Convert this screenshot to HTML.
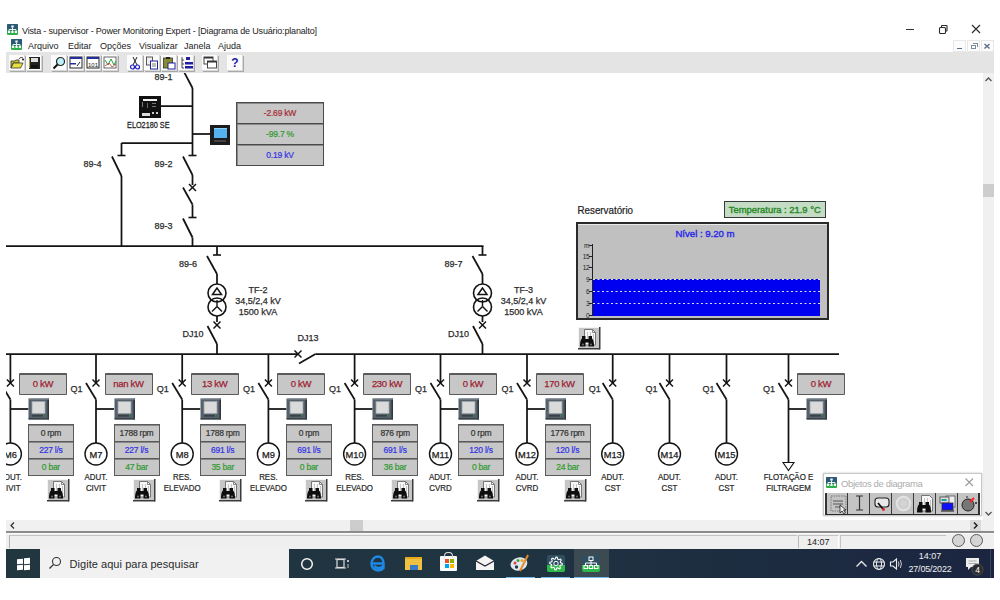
<!DOCTYPE html>
<html><head><meta charset="utf-8">
<style>
*{margin:0;padding:0;box-sizing:border-box}
html,body{width:1000px;height:600px;overflow:hidden;background:#fff;font-family:"Liberation Sans", sans-serif;position:relative}
.a{position:absolute}
#tb{left:6px;top:52px;width:988px;height:21px;background:#e4e4e4}
.btn{position:absolute;top:55px;width:16px;height:16px;background:#fbfbfb;box-shadow:1px 1px 0 #a8a8a8, inset -1px -1px 0 #d8d8d8}
.kw{position:absolute;width:48px;height:22px;background:#c7c7c7;border:1px solid #5a5a5a;border-top-width:2px;border-radius:1px;color:#9c2232;font-size:9.5px;text-align:center;line-height:18px;-webkit-text-stroke:0.25px #9c2232;letter-spacing:-0.3px}
.meter{position:absolute;width:21px;height:21px;background:#56606a;border-radius:1px}
.meter i{position:absolute;left:4px;top:3px;width:13px;height:12px;background:#dcdcdc}
.meter b{position:absolute;left:4px;top:17px;width:13px;height:2px;background:#3a4048}
.dp{position:absolute;width:46px;height:52px;background:#5a5a5a;padding:1px}
.dp div{height:16.3px;margin-bottom:0.7px;background:#c7c7c7;border-top:1px solid #888;font-size:8.5px;text-align:center;line-height:15px;-webkit-text-stroke:0.2px;letter-spacing:-0.25px}
.dp .r1{color:#333} .dp .r2{color:#3232e6} .dp .r3{color:#2f9a2f}
.mp{position:absolute;width:88px;height:64px;background:#4a4a4a;padding:1px}
.mp div{height:20.3px;margin-bottom:0.7px;background:#c7c7c7;border-top:1px solid #8a8a8a;border-left:1px solid #8a8a8a;font-size:8.5px;text-align:center;line-height:19px;-webkit-text-stroke:0.2px;letter-spacing:-0.2px}
.rep{position:absolute;width:22px;height:22px;background:#c9c9c9;border:1px solid #e8e8e8;border-right-color:#555;border-bottom-color:#555}
.rep:before{content:"";position:absolute;left:6px;top:2px;width:11px;height:15px;background:#f4f4f4;border:1px solid #777}
.rep:after{content:"";position:absolute;left:2px;top:9px;width:12px;height:9px;background:#111;border-radius:2px 2px 3px 3px}
</style></head><body>
<svg width="0" height="0" style="position:absolute"><defs>
<symbol id="appico" viewBox="0 0 11 11">
<rect x="0" y="0" width="11" height="11" rx="1" fill="#2fae4c"/>
<rect x="0" y="0" width="11" height="6.5" rx="1" fill="#2b5a76"/>
<rect x="4.3" y="1.5" width="2.4" height="2" fill="#fff"/>
<path d="M5.5 3.5 V5.5 M2 5.5 H9 M2 5.5 V7 M5.5 5.5 V7 M9 5.5 V7" stroke="#fff" stroke-width="0.9" fill="none"/>
<rect x="1" y="7" width="2.2" height="2" fill="#fff"/><rect x="4.4" y="7" width="2.2" height="2" fill="#fff"/><rect x="7.8" y="7" width="2.2" height="2" fill="#fff"/>
</symbol>
<symbol id="mtr" viewBox="0 0 22 22">
<rect x="0.5" y="0.5" width="20.5" height="21" rx="1" fill="#56606b"/>
<rect x="19.5" y="0.5" width="1.5" height="21" fill="#2e353d"/>
<rect x="0.5" y="20" width="20.5" height="1.5" fill="#3a424a"/>
<rect x="0.5" y="0.5" width="20.5" height="1.2" fill="#7a848e"/>
<rect x="4" y="3.5" width="13" height="12" fill="#dadada" stroke="#9aa2aa" stroke-width="0.8"/>
<rect x="4" y="17" width="13" height="1.6" fill="#3a4048"/>
<rect x="15" y="17" width="1.5" height="1.6" fill="#30a040"/>
</symbol>
<symbol id="rep" viewBox="0 0 23 23">
<rect x="0" y="0" width="22" height="22" fill="#c6c6c6"/>
<rect x="0" y="0" width="22" height="1" fill="#f4f4f4"/><rect x="0" y="0" width="1" height="22" fill="#f4f4f4"/>
<rect x="0" y="21" width="22" height="1.5" fill="#3c3c3c"/><rect x="21" y="0" width="1.5" height="22.5" fill="#3c3c3c"/>
<path d="M6.5 2.5 H14.5 L17.5 5.5 V18 H6.5 Z" fill="#f6f6f6" stroke="#5a5a5a" stroke-width="0.8"/>
<path d="M14.5 2.5 V5.5 H17.5" fill="none" stroke="#5a5a5a" stroke-width="0.7"/>
<path d="M9.5 5 V16 M12.5 5 V16 M15.5 7 V16" stroke="#b0b0b0" stroke-width="0.7"/>
<path d="M2 19.5 Q2 13 4 11.5 V9 H7.5 V12 H10.5 V9 H14 V11.5 Q16 13 16 19.5 H10.5 V15.5 H7.5 V19.5 Z" fill="#0e0e0e"/>
<circle cx="5" cy="17.5" r="1.1" fill="#666"/><circle cx="13" cy="17.5" r="1.1" fill="#666"/>
</symbol>
</defs></svg>
<!-- title bar -->
<svg class="a" style="left:7px;top:24px" width="11" height="11"><use href="#appico"/></svg>
<div class="a" style="left:22px;top:26px;font-size:9px;color:#222;white-space:nowrap;letter-spacing:-0.17px" id="title">Vista - supervisor - Power Monitoring Expert - [Diagrama de Usuário:planalto]</div>
<div class="a" style="left:906px;top:29px;width:8px;height:1px;background:#333"></div>
<svg class="a" style="left:937px;top:23px" width="12" height="12"><rect x="2.5" y="4.5" width="6" height="6" rx="1" fill="none" stroke="#2a2a2a" stroke-width="1.1"/><path d="M4.5 4.5 V3 Q4.5 2.5 5 2.5 H9.5 Q10 2.5 10 3 V7.5 Q10 8 9.5 8 H8.5" fill="none" stroke="#2a2a2a" stroke-width="1.1"/></svg>
<svg class="a" style="left:970px;top:23px" width="12" height="12"><path d="M2 2 L10 10 M10 2 L2 10" stroke="#2a2a2a" stroke-width="1.1"/></svg>
<!-- menu -->
<svg class="a" style="left:11px;top:39px" width="11" height="11"><use href="#appico"/></svg>
<div class="a" style="left:28px;top:40.8px;font-size:9px;color:#222;white-space:nowrap">
<span class="a" style="left:0">Arquivo</span><span class="a" style="left:40px">Editar</span><span class="a" style="left:72px">Opções</span><span class="a" style="left:111px">Visualizar</span><span class="a" style="left:156px">Janela</span><span class="a" style="left:190px">Ajuda</span></div>
<div class="a" style="left:953px;top:40px;width:12.5px;height:12px;background:#fcfcfc;border:1px solid #e8e8e8"></div>
<div class="a" style="left:967px;top:40px;width:12.5px;height:12px;background:#fcfcfc;border:1px solid #e8e8e8"></div>
<div class="a" style="left:981px;top:40px;width:12.5px;height:12px;background:#fcfcfc;border:1px solid #e8e8e8"></div>
<!-- toolbar -->
<div class="a" id="tb"></div>
<div class="btn" style="left:9px"></div><div class="btn" style="left:26px"></div>
<div class="btn" style="left:51px"></div><div class="btn" style="left:68px"></div><div class="btn" style="left:85px"></div><div class="btn" style="left:102px"></div>
<div class="btn" style="left:127px"></div><div class="btn" style="left:144px"></div><div class="btn" style="left:161px"></div><div class="btn" style="left:178px"></div>
<div class="btn" style="left:202px"></div><div class="btn" style="left:227px"></div>

<svg class="a" style="left:0;top:52px" width="260" height="21">
<!-- open folder -->
<g transform="translate(9,3)"><path d="M2 6 H6 L7 5 H10 V8 H4 L2 13 Z" fill="#c8c820" stroke="#333" stroke-width="0.8"/><path d="M2 13 L4.5 8 H14 L11.5 13 Z" fill="#e8e040" stroke="#333" stroke-width="0.8"/><path d="M10 4 Q12 1 14 3" fill="none" stroke="#222" stroke-width="0.8"/><circle cx="14" cy="4.5" r="1" fill="#111"/></g>
<!-- save -->
<g transform="translate(26,3)"><rect x="3" y="2" width="11" height="12" fill="#222"/><rect x="5" y="3" width="7" height="4" fill="#ddd"/><rect x="5" y="10" width="7" height="3" fill="#111"/><path d="M3.5 3 V13" stroke="#c8c840" stroke-width="0.8"/></g>
<!-- zoom -->
<g transform="translate(51,3)"><circle cx="9.5" cy="6.5" r="4" fill="#bff0f8" stroke="#222" stroke-width="1.2"/><line x1="6.5" y1="9.5" x2="2.5" y2="13.5" stroke="#111" stroke-width="2"/></g>
<!-- window icon -->
<g transform="translate(68,3)"><rect x="2" y="2" width="12" height="11" fill="#fff" stroke="#222" stroke-width="1"/><rect x="2" y="2" width="12" height="2" fill="#2030a0"/><rect x="2" y="8" width="6" height="1.5" fill="#2030a0"/><path d="M9 11 L12 7" stroke="#222" stroke-width="1"/></g>
<!-- table 101 -->
<g transform="translate(85,3)"><rect x="2" y="2" width="12" height="11" fill="#fff" stroke="#222" stroke-width="1"/><rect x="2" y="2" width="12" height="2" fill="#2030a0"/><text x="8" y="11.5" font-size="6" text-anchor="middle" fill="#222" font-family="Liberation Sans">101</text></g>
<!-- chart -->
<g transform="translate(102,3)"><rect x="2" y="2" width="12" height="11" fill="#fff" stroke="#444" stroke-width="0.8"/><path d="M3 5 L6 10 L9 4 L12 10 L14 6" fill="none" stroke="#20a040" stroke-width="1"/><path d="M3 11 L7 8 L10 12 L14 9" fill="none" stroke="#d03030" stroke-width="0.8"/></g>
<!-- scissors -->
<g transform="translate(127,3)"><path d="M6 2 L10 10 M10 2 L6 10" stroke="#222" stroke-width="1"/><circle cx="5.5" cy="12" r="2" fill="none" stroke="#2020c0" stroke-width="1.2"/><circle cx="10.5" cy="12" r="2" fill="none" stroke="#2020c0" stroke-width="1.2"/></g>
<!-- copy -->
<g transform="translate(144,3)"><rect x="2.5" y="2" width="6" height="8" fill="#eee" stroke="#333" stroke-width="0.8"/><rect x="6.5" y="6" width="7" height="8" fill="#fff" stroke="#2020a0" stroke-width="1"/><path d="M8 9 H12 M8 11 H12" stroke="#444" stroke-width="0.7"/></g>
<!-- paste -->
<g transform="translate(161,3)"><rect x="2.5" y="3" width="9" height="10" fill="#8a8a30" stroke="#333" stroke-width="0.8"/><rect x="5" y="2" width="4" height="2" fill="#222"/><rect x="7" y="8" width="7" height="6" fill="#fff" stroke="#2020a0" stroke-width="1"/></g>
<!-- tree -->
<g transform="translate(178,3)"><path d="M4 2 V13 M4 5 H6 M4 9 H6 M4 13 H6" stroke="#222" stroke-width="0.8" fill="none"/><rect x="8" y="2" width="4" height="3" fill="#2020a0"/><rect x="7" y="7" width="8" height="2.5" fill="#2020a0"/><rect x="7" y="11" width="8" height="2.5" fill="#2020a0"/></g>
<!-- windows -->
<g transform="translate(202,3)"><rect x="2" y="2" width="9" height="7" fill="#fff" stroke="#333" stroke-width="0.9"/><rect x="2" y="2" width="9" height="1.5" fill="#333"/><rect x="5.5" y="6" width="9" height="7" fill="#fff" stroke="#333" stroke-width="0.9"/><rect x="5.5" y="6" width="9" height="1.5" fill="#333"/></g>
<!-- help -->
<text x="235" y="15" font-size="12" font-weight="bold" text-anchor="middle" fill="#1c1ca8" font-family="Liberation Sans">?</text>
</svg>
<!-- scrollbars -->
<div class="a" style="left:983px;top:73px;width:11px;height:447px;background:#f0f0f0"></div>
<div class="a" style="left:983px;top:184px;width:11px;height:13px;background:#cdcdcd"></div>
<div class="a" style="left:6px;top:520px;width:988px;height:11px;background:#f0f0f0"></div>
<div class="a" style="left:350px;top:520px;width:13px;height:11px;background:#cdcdcd"></div>
<div class="a" style="left:6px;top:531px;width:988px;height:1.5px;background:#8c8c8c"></div>
<div class="a" style="left:6px;top:532.5px;width:988px;height:16.5px;background:#efefef;border-top:1px solid #fafafa"></div>

<!-- status bar items -->
<div class="a" style="left:9px;top:534.5px;width:788px;height:13.5px;border-left:1px solid #b0b0b0;border-top:1px solid #c4c4c4"></div>
<div class="a" style="left:798px;top:534.5px;width:40.5px;height:13.5px;border-left:1px solid #b8b8b8;border-top:1px solid #c4c4c4;border-right:1px solid #fff;font-size:9px;line-height:12px;text-align:center;color:#222">14:07</div>
<div class="a" style="left:840px;top:534.5px;width:106px;height:13.5px;border-left:1px solid #c4c4c4;border-top:1px solid #c4c4c4"></div>
<div class="a" style="left:952px;top:534px;width:13px;height:13px;border-radius:50%;background:#d4d4d4;border:1px solid #5a5a5a"></div>
<div class="a" style="left:970px;top:534px;width:13px;height:13px;border-radius:50%;background:#d4d4d4;border:1px solid #5a5a5a"></div>
<!-- scroll arrows -->
<svg class="a" style="left:983px;top:74px" width="11" height="11"><path d="M2.5 7 L5.5 4 L8.5 7" fill="none" stroke="#555" stroke-width="1.3"/></svg>
<svg class="a" style="left:983px;top:508px" width="11" height="11"><path d="M2.5 4 L5.5 7 L8.5 4" fill="none" stroke="#555" stroke-width="1.3"/></svg>
<svg class="a" style="left:7px;top:520px" width="11" height="11"><path d="M7 2.5 L4 5.5 L7 8.5" fill="none" stroke="#333" stroke-width="1.3"/></svg>
<div class="a" style="left:970px;top:520px;width:11px;height:11px;background:#dadada"></div>
<svg class="a" style="left:970px;top:520px" width="11" height="11"><path d="M4 2.5 L7 5.5 L4 8.5" fill="none" stroke="#222" stroke-width="1.5"/></svg>
<!-- MDI buttons -->
<div class="a" style="left:957px;top:47.5px;width:5px;height:1.5px;background:#5a7088"></div>
<div class="a" style="left:970.5px;top:44.5px;width:5px;height:4.5px;border:1px solid #7a8ca0"></div>
<div class="a" style="left:972.5px;top:42.5px;width:5px;height:4.5px;border-top:1px solid #7a8ca0;border-right:1px solid #7a8ca0"></div>
<svg class="a" style="left:981px;top:40px" width="12" height="12"><path d="M3.5 4 L8.5 8.5 M8.5 4 L3.5 8.5" stroke="#5a7088" stroke-width="1.4"/></svg>
<!-- taskbar -->
<div class="a" style="left:6px;top:549px;width:988px;height:29px;background:linear-gradient(90deg,#22363f 0%,#1f3441 50%,#1b2540 100%)"></div>
<div class="a" style="left:40px;top:549px;width:249px;height:29px;background:#f1f1f1"></div>

<!-- taskbar content -->
<div class="a" style="left:17px;top:558.5px;width:5.5px;height:5px;background:#fff;transform:skewY(-4deg)"></div>
<div class="a" style="left:23.5px;top:558px;width:5.5px;height:5.5px;background:#fff;transform:skewY(-4deg)"></div>
<div class="a" style="left:17px;top:564.5px;width:5.5px;height:4.5px;background:#fff;transform:skewY(-4deg)"></div>
<div class="a" style="left:23.5px;top:564.5px;width:5.5px;height:5px;background:#fff;transform:skewY(-4deg)"></div>
<svg class="a" style="left:48px;top:556px" width="14" height="14"><circle cx="8.5" cy="5.5" r="4" fill="none" stroke="#333" stroke-width="1.1"/><line x1="5.6" y1="8.4" x2="1.5" y2="12.5" stroke="#333" stroke-width="1.3"/></svg>
<div class="a" style="left:69.5px;top:557px;font-size:11px;line-height:14px;color:#2a2a2a;white-space:nowrap;letter-spacing:0.05px">Digite aqui para pesquisar</div>
<svg class="a" style="left:299px;top:556px" width="16" height="16"><circle cx="8" cy="8" r="5.3" fill="none" stroke="#f4f4f4" stroke-width="1.5"/></svg>
<svg class="a" style="left:334px;top:556px" width="16" height="16"><rect x="3" y="3.5" width="7" height="8" fill="none" stroke="#ddd" stroke-width="1.2"/><line x1="1" y1="3" x2="12" y2="3" stroke="#ddd" stroke-width="1"/><line x1="1" y1="12" x2="12" y2="12" stroke="#ddd" stroke-width="1"/><line x1="14" y1="4" x2="14" y2="6" stroke="#eee" stroke-width="1.5"/><line x1="14" y1="8" x2="14" y2="12" stroke="#bbb" stroke-width="1"/></svg>
<svg class="a" style="left:369px;top:554px" width="18" height="18"><path d="M3.5 9.5 H14.5 C14.5 5 12 2.5 8.8 2.5 C5 2.5 2.5 6 2.5 10 C2.5 14 5.5 16.5 9 16.5 C11.5 16.5 13.3 15.7 14.5 14.3 V11.8 C13 13.4 11.3 14 9.5 14 C7.3 14 5.8 12.8 5.6 11.5" fill="none" stroke="#1e88e5" stroke-width="2.4"/></svg>
<div class="a" style="left:405px;top:557px;width:17px;height:13px;background:#f0c040;border-top:2px solid #e8a820"></div>
<div class="a" style="left:410px;top:565px;width:8px;height:5px;background:#3a78c8"></div>
<div class="a" style="left:440px;top:556px;width:17px;height:15px;background:#fafafa;border-radius:1px"></div>
<div class="a" style="left:444px;top:552px;width:9px;height:6px;border:1.2px solid #ddd;border-bottom:none;border-radius:4px 4px 0 0"></div>
<div class="a" style="left:445px;top:559px;width:4px;height:4px;background:#f25022"></div><div class="a" style="left:449.5px;top:559px;width:4px;height:4px;background:#7fba00"></div>
<div class="a" style="left:445px;top:563.5px;width:4px;height:4px;background:#00a4ef"></div><div class="a" style="left:449.5px;top:563.5px;width:4px;height:4px;background:#ffb900"></div>
<svg class="a" style="left:475px;top:554px" width="20" height="18"><path d="M1 7 L10 1.5 L19 7 V16 H1 Z" fill="#f4f4f4"/><path d="M1 7 L10 12 L19 7" fill="none" stroke="#223" stroke-width="1.2"/></svg>
<svg class="a" style="left:509px;top:553px" width="22" height="20"><ellipse cx="10" cy="11" rx="8.5" ry="6.5" fill="#dfe8ee" transform="rotate(-15 10 11)"/><circle cx="6" cy="10" r="1.5" fill="#e04040"/><circle cx="9" cy="7.5" r="1.5" fill="#40a040"/><circle cx="13" cy="7.5" r="1.5" fill="#f0a020"/><circle cx="7.5" cy="14" r="1.7" fill="#2a3a48"/><line x1="11" y1="18" x2="19" y2="2" stroke="#e08a2a" stroke-width="2"/></svg>
<div class="a" style="left:547px;top:555px;width:18px;height:17px;background:#2f4f60;border-radius:2px;overflow:hidden"><div class="a" style="left:0;top:10px;width:18px;height:7px;background:#2fb84a"></div></div>
<svg class="a" style="left:547px;top:555px" width="18" height="17"><path d="M15.30,8.50 L15.18,9.73 L13.25,10.26 L12.82,11.06 L13.45,12.95 L12.50,13.74 L10.76,12.75 L9.90,13.01 L9.00,14.80 L7.77,14.68 L7.24,12.75 L6.44,12.32 L4.55,12.95 L3.76,12.00 L4.75,10.26 L4.49,9.40 L2.70,8.50 L2.82,7.27 L4.75,6.74 L5.18,5.94 L4.55,4.05 L5.50,3.26 L7.24,4.25 L8.10,3.99 L9.00,2.20 L10.23,2.32 L10.76,4.25 L11.56,4.68 L13.45,4.05 L14.24,5.00 L13.25,6.74 L13.51,7.60 Z" fill="none" stroke="#fff" stroke-width="1.1"/><circle cx="9" cy="8.5" r="2.2" fill="none" stroke="#fff" stroke-width="1"/></svg>
<div class="a" style="left:574px;top:549px;width:35px;height:29px;background:#3c4a52"></div>
<div class="a" style="left:582px;top:555px;width:18px;height:17px;background:#2f4f60;border-radius:2px;overflow:hidden"><div class="a" style="left:0;top:10px;width:18px;height:7px;background:#2fb84a"></div></div>
<svg class="a" style="left:582px;top:555px" width="18" height="17"><rect x="7" y="2" width="4" height="3.5" fill="none" stroke="#fff" stroke-width="1"/><path d="M9 5.5 V8 M3.5 8 H14.5 M3.5 8 V10.5 M9 8 V10.5 M14.5 8 V10.5" stroke="#fff" stroke-width="1" fill="none"/><rect x="2" y="10.5" width="3.5" height="3" fill="none" stroke="#fff" stroke-width="1"/><rect x="7.2" y="10.5" width="3.5" height="3" fill="none" stroke="#fff" stroke-width="1"/><rect x="12.5" y="10.5" width="3.5" height="3" fill="none" stroke="#fff" stroke-width="1"/></svg>
<div class="a" style="left:506px;top:576.5px;width:29px;height:1.5px;background:#76b9ed"></div>
<div class="a" style="left:541px;top:576.5px;width:29px;height:1.5px;background:#76b9ed"></div>
<div class="a" style="left:574px;top:576.5px;width:35px;height:1.5px;background:#76b9ed"></div>
<svg class="a" style="left:855px;top:559px" width="13" height="9"><path d="M1.5 7.5 L6.5 2.5 L11.5 7.5" fill="none" stroke="#e8e8e8" stroke-width="1.4"/></svg>
<svg class="a" style="left:872px;top:557px" width="14" height="14"><circle cx="7" cy="7" r="5.5" fill="none" stroke="#eee" stroke-width="1.1"/><ellipse cx="7" cy="7" rx="2.5" ry="5.5" fill="none" stroke="#eee" stroke-width="1"/><line x1="1.5" y1="5" x2="12.5" y2="5" stroke="#eee" stroke-width="1"/><line x1="1.5" y1="9" x2="12.5" y2="9" stroke="#eee" stroke-width="1"/></svg>
<svg class="a" style="left:889px;top:557px" width="14" height="14"><path d="M1.5 5 H4 L7.5 2 V12 L4 9 H1.5 Z" fill="none" stroke="#eee" stroke-width="1.1"/><path d="M9.3 4.5 Q10.8 7 9.3 9.5 M11.3 3 Q13.5 7 11.3 11" fill="none" stroke="#ccc" stroke-width="1"/></svg>
<div class="a" style="left:905px;top:550.5px;width:50px;text-align:center;font-size:9px;line-height:11px;color:#f0f0f0">14:07</div>
<div class="a" style="left:905px;top:563.5px;width:50px;text-align:center;font-size:9px;line-height:11px;color:#f0f0f0;letter-spacing:-0.2px">27/05/2022</div>
<svg class="a" style="left:963px;top:555px" width="22" height="22"><path d="M3 3 H16 V12 H8 L5 15 V12 H3 Z" fill="#eee"/><line x1="5.5" y1="6" x2="13.5" y2="6" stroke="#999" stroke-width="0.8"/><line x1="5.5" y1="8.5" x2="13.5" y2="8.5" stroke="#999" stroke-width="0.8"/><circle cx="14.5" cy="14.5" r="5.5" fill="#2b2b2b" stroke="#555" stroke-width="0.8"/><text x="14.5" y="17.8" font-size="8.5" fill="#fff" text-anchor="middle" font-family="Liberation Sans">4</text></svg>
<div class="a" style="left:990px;top:549px;width:1px;height:29px;background:#38465a"></div>
<!-- diagram -->
<svg class="a" style="left:0;top:0" width="1000" height="600" font-family='"Liberation Sans", sans-serif'>
<defs><clipPath id="cv"><rect x="6" y="73" width="977" height="447"/></clipPath></defs>
<g clip-path="url(#cv)">
<line x1="183" y1="70" x2="192.5" y2="88" stroke="#141414" stroke-width="1.75"/>
<line x1="192.5" y1="88" x2="192.5" y2="155.5" stroke="#141414" stroke-width="1.75"/>
<line x1="188.5" y1="155.5" x2="196.5" y2="155.5" stroke="#141414" stroke-width="1.6"/>
<line x1="160" y1="106" x2="192.5" y2="106" stroke="#141414" stroke-width="1.75"/>
<line x1="192.5" y1="134" x2="210" y2="134" stroke="#141414" stroke-width="1.75"/>
<line x1="121.5" y1="143" x2="192.5" y2="143" stroke="#141414" stroke-width="1.75"/>
<line x1="121.5" y1="143" x2="121.5" y2="155.5" stroke="#141414" stroke-width="1.75"/>
<line x1="117.5" y1="155.5" x2="125.5" y2="155.5" stroke="#141414" stroke-width="1.6"/>
<line x1="112" y1="156.5" x2="121.5" y2="176" stroke="#141414" stroke-width="1.75"/>
<line x1="121.5" y1="176" x2="121.5" y2="246" stroke="#141414" stroke-width="1.75"/>
<line x1="183" y1="156.5" x2="192.5" y2="175" stroke="#141414" stroke-width="1.75"/>
<line x1="192.5" y1="175" x2="192.5" y2="185" stroke="#141414" stroke-width="1.75"/>
<line x1="189.0" y1="184.0" x2="196.0" y2="191.0" stroke="#141414" stroke-width="1.5"/>
<line x1="189.0" y1="191.0" x2="196.0" y2="184.0" stroke="#141414" stroke-width="1.5"/>
<line x1="183" y1="187.5" x2="192.5" y2="204.5" stroke="#141414" stroke-width="1.75"/>
<line x1="192.5" y1="204.5" x2="192.5" y2="217.5" stroke="#141414" stroke-width="1.75"/>
<line x1="188.5" y1="217.5" x2="196.5" y2="217.5" stroke="#141414" stroke-width="1.6"/>
<line x1="183" y1="218.5" x2="192.5" y2="237.5" stroke="#141414" stroke-width="1.75"/>
<line x1="192.5" y1="237.5" x2="192.5" y2="246" stroke="#141414" stroke-width="1.75"/>
<text transform="translate(163.5,79.5) scale(1.0,1)" font-size="9" fill="#2c2c2c" stroke="#2c2c2c" stroke-width="0.25" text-anchor="middle" font-weight="normal" >89-1</text>
<text transform="translate(92.5,167) scale(1.0,1)" font-size="9" fill="#2c2c2c" stroke="#2c2c2c" stroke-width="0.25" text-anchor="middle" font-weight="normal" >89-4</text>
<text transform="translate(163.5,167) scale(1.0,1)" font-size="9" fill="#2c2c2c" stroke="#2c2c2c" stroke-width="0.25" text-anchor="middle" font-weight="normal" >89-2</text>
<text transform="translate(163.5,228.5) scale(1.0,1)" font-size="9" fill="#2c2c2c" stroke="#2c2c2c" stroke-width="0.25" text-anchor="middle" font-weight="normal" >89-3</text>
<text transform="translate(148.3,127.8) scale(0.86,1)" font-size="8.5" fill="#242424" stroke="#242424" stroke-width="0.25" text-anchor="middle" font-weight="normal" >ELO2180 SE</text>
<line x1="6" y1="246" x2="483.45" y2="246" stroke="#141414" stroke-width="1.75"/>
<line x1="217" y1="246" x2="217" y2="255" stroke="#141414" stroke-width="1.75"/>
<line x1="213" y1="255" x2="221" y2="255" stroke="#141414" stroke-width="1.6"/>
<line x1="207" y1="256" x2="217" y2="274" stroke="#141414" stroke-width="1.75"/>
<line x1="217" y1="274" x2="217" y2="284" stroke="#141414" stroke-width="1.75"/>
<circle cx="217" cy="293" r="9" fill="none" stroke="#141414" stroke-width="1.6"/>
<circle cx="217" cy="307" r="9" fill="none" stroke="#141414" stroke-width="1.6"/>
<polygon points="217,288 212.5,294.5 221.5,294.5" fill="none" stroke="#141414" stroke-width="1.5"/>
<line x1="217" y1="306.5" x2="217" y2="300" stroke="#141414" stroke-width="1.4"/>
<line x1="217" y1="306.5" x2="212" y2="311.5" stroke="#141414" stroke-width="1.4"/>
<line x1="217" y1="306.5" x2="222" y2="311.5" stroke="#141414" stroke-width="1.4"/>
<line x1="217" y1="316" x2="217" y2="322" stroke="#141414" stroke-width="1.75"/>
<line x1="213.5" y1="321.5" x2="220.5" y2="328.5" stroke="#141414" stroke-width="1.5"/>
<line x1="213.5" y1="328.5" x2="220.5" y2="321.5" stroke="#141414" stroke-width="1.5"/>
<line x1="207.5" y1="326" x2="217" y2="344" stroke="#141414" stroke-width="1.75"/>
<line x1="217" y1="344" x2="217" y2="354" stroke="#141414" stroke-width="1.75"/>
<text transform="translate(188,267) scale(1.0,1)" font-size="9" fill="#2c2c2c" stroke="#2c2c2c" stroke-width="0.25" text-anchor="middle" font-weight="normal" >89-6</text>
<text transform="translate(193,337) scale(1.0,1)" font-size="9" fill="#2c2c2c" stroke="#2c2c2c" stroke-width="0.25" text-anchor="middle" font-weight="normal" >DJ10</text>
<text transform="translate(258,293) scale(1.0,1)" font-size="9" fill="#2c2c2c" stroke="#2c2c2c" stroke-width="0.25" text-anchor="middle" font-weight="normal" >TF-2</text>
<text transform="translate(258,304) scale(1.0,1)" font-size="9" fill="#2c2c2c" stroke="#2c2c2c" stroke-width="0.25" text-anchor="middle" font-weight="normal" >34,5/2,4 kV</text>
<text transform="translate(258,315) scale(1.0,1)" font-size="9" fill="#2c2c2c" stroke="#2c2c2c" stroke-width="0.25" text-anchor="middle" font-weight="normal" >1500 kVA</text>
<line x1="482.5" y1="246" x2="482.5" y2="255" stroke="#141414" stroke-width="1.75"/>
<line x1="478.5" y1="255" x2="486.5" y2="255" stroke="#141414" stroke-width="1.6"/>
<line x1="472.5" y1="256" x2="482.5" y2="274" stroke="#141414" stroke-width="1.75"/>
<line x1="482.5" y1="274" x2="482.5" y2="284" stroke="#141414" stroke-width="1.75"/>
<circle cx="482.5" cy="293" r="9" fill="none" stroke="#141414" stroke-width="1.6"/>
<circle cx="482.5" cy="307" r="9" fill="none" stroke="#141414" stroke-width="1.6"/>
<polygon points="482.5,288 478.0,294.5 487.0,294.5" fill="none" stroke="#141414" stroke-width="1.5"/>
<line x1="482.5" y1="306.5" x2="482.5" y2="300" stroke="#141414" stroke-width="1.4"/>
<line x1="482.5" y1="306.5" x2="477.5" y2="311.5" stroke="#141414" stroke-width="1.4"/>
<line x1="482.5" y1="306.5" x2="487.5" y2="311.5" stroke="#141414" stroke-width="1.4"/>
<line x1="482.5" y1="316" x2="482.5" y2="322" stroke="#141414" stroke-width="1.75"/>
<line x1="479.0" y1="321.5" x2="486.0" y2="328.5" stroke="#141414" stroke-width="1.5"/>
<line x1="479.0" y1="328.5" x2="486.0" y2="321.5" stroke="#141414" stroke-width="1.5"/>
<line x1="473.0" y1="326" x2="482.5" y2="344" stroke="#141414" stroke-width="1.75"/>
<line x1="482.5" y1="344" x2="482.5" y2="354" stroke="#141414" stroke-width="1.75"/>
<text transform="translate(453.5,267) scale(1.0,1)" font-size="9" fill="#2c2c2c" stroke="#2c2c2c" stroke-width="0.25" text-anchor="middle" font-weight="normal" >89-7</text>
<text transform="translate(458.5,337) scale(1.0,1)" font-size="9" fill="#2c2c2c" stroke="#2c2c2c" stroke-width="0.25" text-anchor="middle" font-weight="normal" >DJ10</text>
<text transform="translate(523.5,293) scale(1.0,1)" font-size="9" fill="#2c2c2c" stroke="#2c2c2c" stroke-width="0.25" text-anchor="middle" font-weight="normal" >TF-3</text>
<text transform="translate(523.5,304) scale(1.0,1)" font-size="9" fill="#2c2c2c" stroke="#2c2c2c" stroke-width="0.25" text-anchor="middle" font-weight="normal" >34,5/2,4 kV</text>
<text transform="translate(523.5,315) scale(1.0,1)" font-size="9" fill="#2c2c2c" stroke="#2c2c2c" stroke-width="0.25" text-anchor="middle" font-weight="normal" >1500 kVA</text>
<line x1="6" y1="354" x2="298" y2="354" stroke="#141414" stroke-width="1.75"/>
<line x1="294.5" y1="350.5" x2="301.5" y2="357.5" stroke="#141414" stroke-width="1.5"/>
<line x1="294.5" y1="357.5" x2="301.5" y2="350.5" stroke="#141414" stroke-width="1.5"/>
<line x1="299" y1="363.5" x2="315.5" y2="354" stroke="#141414" stroke-width="1.75"/>
<line x1="315.5" y1="354" x2="839" y2="354" stroke="#141414" stroke-width="1.75"/>
<text transform="translate(308,341) scale(1.0,1)" font-size="9" fill="#2c2c2c" stroke="#2c2c2c" stroke-width="0.25" text-anchor="middle" font-weight="normal" >DJ13</text>
<line x1="10.4" y1="354" x2="10.4" y2="383" stroke="#141414" stroke-width="1.75"/>
<line x1="6.9" y1="379.5" x2="13.9" y2="386.5" stroke="#141414" stroke-width="1.5"/>
<line x1="6.9" y1="386.5" x2="13.9" y2="379.5" stroke="#141414" stroke-width="1.5"/>
<line x1="0.40000000000000036" y1="383" x2="10.4" y2="399.5" stroke="#141414" stroke-width="1.75"/>
<line x1="10.4" y1="399.5" x2="10.4" y2="443" stroke="#141414" stroke-width="1.75"/>
<circle cx="10.4" cy="454" r="11" fill="#fff" stroke="#141414" stroke-width="1.4"/>
<text transform="translate(10.4,457.6) scale(1.0,1)" font-size="9.3" fill="#202020" stroke="#202020" stroke-width="0.25" text-anchor="middle" font-weight="normal" >M6</text>
<text transform="translate(10.4,480) scale(0.88,1)" font-size="9" fill="#2c2c2c" stroke="#2c2c2c" stroke-width="0.25" text-anchor="middle" font-weight="normal" >ADUT.</text>
<text transform="translate(10.4,490.5) scale(0.88,1)" font-size="9" fill="#2c2c2c" stroke="#2c2c2c" stroke-width="0.25" text-anchor="middle" font-weight="normal" >CIVIT</text>
<text transform="translate(-9.1,391.8) scale(1.0,1)" font-size="9" fill="#2c2c2c" stroke="#2c2c2c" stroke-width="0.25" text-anchor="middle" font-weight="normal" >Q1</text>
<line x1="10.4" y1="409" x2="28.4" y2="409" stroke="#141414" stroke-width="1.75"/>
<line x1="96" y1="354" x2="96" y2="383" stroke="#141414" stroke-width="1.75"/>
<line x1="92.5" y1="379.5" x2="99.5" y2="386.5" stroke="#141414" stroke-width="1.5"/>
<line x1="92.5" y1="386.5" x2="99.5" y2="379.5" stroke="#141414" stroke-width="1.5"/>
<line x1="86" y1="383" x2="96" y2="399.5" stroke="#141414" stroke-width="1.75"/>
<line x1="96" y1="399.5" x2="96" y2="443" stroke="#141414" stroke-width="1.75"/>
<circle cx="96" cy="454" r="11" fill="#fff" stroke="#141414" stroke-width="1.4"/>
<text transform="translate(96,457.6) scale(1.0,1)" font-size="9.3" fill="#202020" stroke="#202020" stroke-width="0.25" text-anchor="middle" font-weight="normal" >M7</text>
<text transform="translate(96,480) scale(0.88,1)" font-size="9" fill="#2c2c2c" stroke="#2c2c2c" stroke-width="0.25" text-anchor="middle" font-weight="normal" >ADUT.</text>
<text transform="translate(96,490.5) scale(0.88,1)" font-size="9" fill="#2c2c2c" stroke="#2c2c2c" stroke-width="0.25" text-anchor="middle" font-weight="normal" >CIVIT</text>
<text transform="translate(76.5,391.8) scale(1.0,1)" font-size="9" fill="#2c2c2c" stroke="#2c2c2c" stroke-width="0.25" text-anchor="middle" font-weight="normal" >Q1</text>
<line x1="96" y1="409" x2="114" y2="409" stroke="#141414" stroke-width="1.75"/>
<line x1="182.2" y1="354" x2="182.2" y2="383" stroke="#141414" stroke-width="1.75"/>
<line x1="178.7" y1="379.5" x2="185.7" y2="386.5" stroke="#141414" stroke-width="1.5"/>
<line x1="178.7" y1="386.5" x2="185.7" y2="379.5" stroke="#141414" stroke-width="1.5"/>
<line x1="172.2" y1="383" x2="182.2" y2="399.5" stroke="#141414" stroke-width="1.75"/>
<line x1="182.2" y1="399.5" x2="182.2" y2="443" stroke="#141414" stroke-width="1.75"/>
<circle cx="182.2" cy="454" r="11" fill="#fff" stroke="#141414" stroke-width="1.4"/>
<text transform="translate(182.2,457.6) scale(1.0,1)" font-size="9.3" fill="#202020" stroke="#202020" stroke-width="0.25" text-anchor="middle" font-weight="normal" >M8</text>
<text transform="translate(182.2,480) scale(0.88,1)" font-size="9" fill="#2c2c2c" stroke="#2c2c2c" stroke-width="0.25" text-anchor="middle" font-weight="normal" >RES.</text>
<text transform="translate(182.2,490.5) scale(0.88,1)" font-size="9" fill="#2c2c2c" stroke="#2c2c2c" stroke-width="0.25" text-anchor="middle" font-weight="normal" >ELEVADO</text>
<text transform="translate(162.7,391.8) scale(1.0,1)" font-size="9" fill="#2c2c2c" stroke="#2c2c2c" stroke-width="0.25" text-anchor="middle" font-weight="normal" >Q1</text>
<line x1="182.2" y1="409" x2="200.2" y2="409" stroke="#141414" stroke-width="1.75"/>
<line x1="268.4" y1="354" x2="268.4" y2="383" stroke="#141414" stroke-width="1.75"/>
<line x1="264.9" y1="379.5" x2="271.9" y2="386.5" stroke="#141414" stroke-width="1.5"/>
<line x1="264.9" y1="386.5" x2="271.9" y2="379.5" stroke="#141414" stroke-width="1.5"/>
<line x1="258.4" y1="383" x2="268.4" y2="399.5" stroke="#141414" stroke-width="1.75"/>
<line x1="268.4" y1="399.5" x2="268.4" y2="443" stroke="#141414" stroke-width="1.75"/>
<circle cx="268.4" cy="454" r="11" fill="#fff" stroke="#141414" stroke-width="1.4"/>
<text transform="translate(268.4,457.6) scale(1.0,1)" font-size="9.3" fill="#202020" stroke="#202020" stroke-width="0.25" text-anchor="middle" font-weight="normal" >M9</text>
<text transform="translate(268.4,480) scale(0.88,1)" font-size="9" fill="#2c2c2c" stroke="#2c2c2c" stroke-width="0.25" text-anchor="middle" font-weight="normal" >RES.</text>
<text transform="translate(268.4,490.5) scale(0.88,1)" font-size="9" fill="#2c2c2c" stroke="#2c2c2c" stroke-width="0.25" text-anchor="middle" font-weight="normal" >ELEVADO</text>
<text transform="translate(248.89999999999998,391.8) scale(1.0,1)" font-size="9" fill="#2c2c2c" stroke="#2c2c2c" stroke-width="0.25" text-anchor="middle" font-weight="normal" >Q1</text>
<line x1="268.4" y1="409" x2="286.4" y2="409" stroke="#141414" stroke-width="1.75"/>
<line x1="354.6" y1="354" x2="354.6" y2="383" stroke="#141414" stroke-width="1.75"/>
<line x1="351.1" y1="379.5" x2="358.1" y2="386.5" stroke="#141414" stroke-width="1.5"/>
<line x1="351.1" y1="386.5" x2="358.1" y2="379.5" stroke="#141414" stroke-width="1.5"/>
<line x1="344.6" y1="383" x2="354.6" y2="399.5" stroke="#141414" stroke-width="1.75"/>
<line x1="354.6" y1="399.5" x2="354.6" y2="443" stroke="#141414" stroke-width="1.75"/>
<circle cx="354.6" cy="454" r="11" fill="#fff" stroke="#141414" stroke-width="1.4"/>
<text transform="translate(354.6,457.6) scale(1.0,1)" font-size="9.3" fill="#202020" stroke="#202020" stroke-width="0.25" text-anchor="middle" font-weight="normal" >M10</text>
<text transform="translate(354.6,480) scale(0.88,1)" font-size="9" fill="#2c2c2c" stroke="#2c2c2c" stroke-width="0.25" text-anchor="middle" font-weight="normal" >RES.</text>
<text transform="translate(354.6,490.5) scale(0.88,1)" font-size="9" fill="#2c2c2c" stroke="#2c2c2c" stroke-width="0.25" text-anchor="middle" font-weight="normal" >ELEVADO</text>
<text transform="translate(335.1,391.8) scale(1.0,1)" font-size="9" fill="#2c2c2c" stroke="#2c2c2c" stroke-width="0.25" text-anchor="middle" font-weight="normal" >Q1</text>
<line x1="354.6" y1="409" x2="372.6" y2="409" stroke="#141414" stroke-width="1.75"/>
<line x1="440.5" y1="354" x2="440.5" y2="383" stroke="#141414" stroke-width="1.75"/>
<line x1="437.0" y1="379.5" x2="444.0" y2="386.5" stroke="#141414" stroke-width="1.5"/>
<line x1="437.0" y1="386.5" x2="444.0" y2="379.5" stroke="#141414" stroke-width="1.5"/>
<line x1="430.5" y1="383" x2="440.5" y2="399.5" stroke="#141414" stroke-width="1.75"/>
<line x1="440.5" y1="399.5" x2="440.5" y2="443" stroke="#141414" stroke-width="1.75"/>
<circle cx="440.5" cy="454" r="11" fill="#fff" stroke="#141414" stroke-width="1.4"/>
<text transform="translate(440.5,457.6) scale(1.0,1)" font-size="9.3" fill="#202020" stroke="#202020" stroke-width="0.25" text-anchor="middle" font-weight="normal" >M11</text>
<text transform="translate(440.5,480) scale(0.88,1)" font-size="9" fill="#2c2c2c" stroke="#2c2c2c" stroke-width="0.25" text-anchor="middle" font-weight="normal" >ADUT.</text>
<text transform="translate(440.5,490.5) scale(0.88,1)" font-size="9" fill="#2c2c2c" stroke="#2c2c2c" stroke-width="0.25" text-anchor="middle" font-weight="normal" >CVRD</text>
<text transform="translate(421.0,391.8) scale(1.0,1)" font-size="9" fill="#2c2c2c" stroke="#2c2c2c" stroke-width="0.25" text-anchor="middle" font-weight="normal" >Q1</text>
<line x1="440.5" y1="409" x2="458.5" y2="409" stroke="#141414" stroke-width="1.75"/>
<line x1="527" y1="354" x2="527" y2="383" stroke="#141414" stroke-width="1.75"/>
<line x1="523.5" y1="379.5" x2="530.5" y2="386.5" stroke="#141414" stroke-width="1.5"/>
<line x1="523.5" y1="386.5" x2="530.5" y2="379.5" stroke="#141414" stroke-width="1.5"/>
<line x1="517" y1="383" x2="527" y2="399.5" stroke="#141414" stroke-width="1.75"/>
<line x1="527" y1="399.5" x2="527" y2="443" stroke="#141414" stroke-width="1.75"/>
<circle cx="527" cy="454" r="11" fill="#fff" stroke="#141414" stroke-width="1.4"/>
<text transform="translate(527,457.6) scale(1.0,1)" font-size="9.3" fill="#202020" stroke="#202020" stroke-width="0.25" text-anchor="middle" font-weight="normal" >M12</text>
<text transform="translate(527,480) scale(0.88,1)" font-size="9" fill="#2c2c2c" stroke="#2c2c2c" stroke-width="0.25" text-anchor="middle" font-weight="normal" >ADUT.</text>
<text transform="translate(527,490.5) scale(0.88,1)" font-size="9" fill="#2c2c2c" stroke="#2c2c2c" stroke-width="0.25" text-anchor="middle" font-weight="normal" >CVRD</text>
<text transform="translate(507.5,391.8) scale(1.0,1)" font-size="9" fill="#2c2c2c" stroke="#2c2c2c" stroke-width="0.25" text-anchor="middle" font-weight="normal" >Q1</text>
<line x1="527" y1="409" x2="545" y2="409" stroke="#141414" stroke-width="1.75"/>
<line x1="612.7" y1="354" x2="612.7" y2="383" stroke="#141414" stroke-width="1.75"/>
<line x1="609.2" y1="379.5" x2="616.2" y2="386.5" stroke="#141414" stroke-width="1.5"/>
<line x1="609.2" y1="386.5" x2="616.2" y2="379.5" stroke="#141414" stroke-width="1.5"/>
<line x1="602.7" y1="383" x2="612.7" y2="399.5" stroke="#141414" stroke-width="1.75"/>
<line x1="612.7" y1="399.5" x2="612.7" y2="443" stroke="#141414" stroke-width="1.75"/>
<circle cx="612.7" cy="454" r="11" fill="#fff" stroke="#141414" stroke-width="1.4"/>
<text transform="translate(612.7,457.6) scale(1.0,1)" font-size="9.3" fill="#202020" stroke="#202020" stroke-width="0.25" text-anchor="middle" font-weight="normal" >M13</text>
<text transform="translate(612.7,480) scale(0.88,1)" font-size="9" fill="#2c2c2c" stroke="#2c2c2c" stroke-width="0.25" text-anchor="middle" font-weight="normal" >ADUT.</text>
<text transform="translate(612.7,490.5) scale(0.88,1)" font-size="9" fill="#2c2c2c" stroke="#2c2c2c" stroke-width="0.25" text-anchor="middle" font-weight="normal" >CST</text>
<text transform="translate(594.7,391.8) scale(1.0,1)" font-size="9" fill="#2c2c2c" stroke="#2c2c2c" stroke-width="0.25" text-anchor="middle" font-weight="normal" >Q1</text>
<line x1="669.5" y1="354" x2="669.5" y2="383" stroke="#141414" stroke-width="1.75"/>
<line x1="666.0" y1="379.5" x2="673.0" y2="386.5" stroke="#141414" stroke-width="1.5"/>
<line x1="666.0" y1="386.5" x2="673.0" y2="379.5" stroke="#141414" stroke-width="1.5"/>
<line x1="659.5" y1="383" x2="669.5" y2="399.5" stroke="#141414" stroke-width="1.75"/>
<line x1="669.5" y1="399.5" x2="669.5" y2="443" stroke="#141414" stroke-width="1.75"/>
<circle cx="669.5" cy="454" r="11" fill="#fff" stroke="#141414" stroke-width="1.4"/>
<text transform="translate(669.5,457.6) scale(1.0,1)" font-size="9.3" fill="#202020" stroke="#202020" stroke-width="0.25" text-anchor="middle" font-weight="normal" >M14</text>
<text transform="translate(669.5,480) scale(0.88,1)" font-size="9" fill="#2c2c2c" stroke="#2c2c2c" stroke-width="0.25" text-anchor="middle" font-weight="normal" >ADUT.</text>
<text transform="translate(669.5,490.5) scale(0.88,1)" font-size="9" fill="#2c2c2c" stroke="#2c2c2c" stroke-width="0.25" text-anchor="middle" font-weight="normal" >CST</text>
<text transform="translate(651.5,391.8) scale(1.0,1)" font-size="9" fill="#2c2c2c" stroke="#2c2c2c" stroke-width="0.25" text-anchor="middle" font-weight="normal" >Q1</text>
<line x1="726.5" y1="354" x2="726.5" y2="383" stroke="#141414" stroke-width="1.75"/>
<line x1="723.0" y1="379.5" x2="730.0" y2="386.5" stroke="#141414" stroke-width="1.5"/>
<line x1="723.0" y1="386.5" x2="730.0" y2="379.5" stroke="#141414" stroke-width="1.5"/>
<line x1="716.5" y1="383" x2="726.5" y2="399.5" stroke="#141414" stroke-width="1.75"/>
<line x1="726.5" y1="399.5" x2="726.5" y2="443" stroke="#141414" stroke-width="1.75"/>
<circle cx="726.5" cy="454" r="11" fill="#fff" stroke="#141414" stroke-width="1.4"/>
<text transform="translate(726.5,457.6) scale(1.0,1)" font-size="9.3" fill="#202020" stroke="#202020" stroke-width="0.25" text-anchor="middle" font-weight="normal" >M15</text>
<text transform="translate(726.5,480) scale(0.88,1)" font-size="9" fill="#2c2c2c" stroke="#2c2c2c" stroke-width="0.25" text-anchor="middle" font-weight="normal" >ADUT.</text>
<text transform="translate(726.5,490.5) scale(0.88,1)" font-size="9" fill="#2c2c2c" stroke="#2c2c2c" stroke-width="0.25" text-anchor="middle" font-weight="normal" >CST</text>
<text transform="translate(708.5,391.8) scale(1.0,1)" font-size="9" fill="#2c2c2c" stroke="#2c2c2c" stroke-width="0.25" text-anchor="middle" font-weight="normal" >Q1</text>
<line x1="788.5" y1="354" x2="788.5" y2="383" stroke="#141414" stroke-width="1.75"/>
<line x1="785.0" y1="379.5" x2="792.0" y2="386.5" stroke="#141414" stroke-width="1.5"/>
<line x1="785.0" y1="386.5" x2="792.0" y2="379.5" stroke="#141414" stroke-width="1.5"/>
<line x1="778.5" y1="383" x2="788.5" y2="399.5" stroke="#141414" stroke-width="1.75"/>
<line x1="788.5" y1="399.5" x2="788.5" y2="462.5" stroke="#141414" stroke-width="1.75"/>
<line x1="788.5" y1="409" x2="806.5" y2="409" stroke="#141414" stroke-width="1.75"/>
<polygon points="783.0,462.5 794.0,462.5 788.5,470.5" fill="#fff" stroke="#141414" stroke-width="1.1"/>
<text transform="translate(769.0,391.8) scale(1.0,1)" font-size="9" fill="#2c2c2c" stroke="#2c2c2c" stroke-width="0.25" text-anchor="middle" font-weight="normal" >Q1</text>
<text transform="translate(788.5,480) scale(0.88,1)" font-size="9" fill="#2c2c2c" stroke="#2c2c2c" stroke-width="0.25" text-anchor="middle" font-weight="normal" >FLOTAÇÃO E</text>
<text transform="translate(788.5,490.5) scale(0.88,1)" font-size="9" fill="#2c2c2c" stroke="#2c2c2c" stroke-width="0.25" text-anchor="middle" font-weight="normal" >FILTRAGEM</text>
<text transform="translate(577.5,214) scale(0.98,1)" font-size="10" fill="#202020" stroke="#202020" stroke-width="0.2" text-anchor="start" font-weight="normal" >Reservatório</text>
</g>
</svg>
<div class="kw" style="left:18.9px;top:372.5px">0 kW</div>
<svg class="a" style="left:27.9px;top:397.5px" width="22" height="22"><use href="#mtr"/></svg>
<div class="dp" style="left:27.9px;top:424px"><div class="r1">0 rpm</div><div class="r2">227 l/s</div><div class="r3">0 bar</div></div>
<svg class="a" style="left:46.9px;top:479px" width="23" height="23"><use href="#rep"/></svg>
<div class="kw" style="left:104.5px;top:372.5px">nan kW</div>
<svg class="a" style="left:113.5px;top:397.5px" width="22" height="22"><use href="#mtr"/></svg>
<div class="dp" style="left:113.5px;top:424px"><div class="r1">1788 rpm</div><div class="r2">227 l/s</div><div class="r3">47 bar</div></div>
<svg class="a" style="left:132.5px;top:479px" width="23" height="23"><use href="#rep"/></svg>
<div class="kw" style="left:190.7px;top:372.5px">13 kW</div>
<svg class="a" style="left:199.7px;top:397.5px" width="22" height="22"><use href="#mtr"/></svg>
<div class="dp" style="left:199.7px;top:424px"><div class="r1">1788 rpm</div><div class="r2">691 l/s</div><div class="r3">35 bar</div></div>
<svg class="a" style="left:218.7px;top:479px" width="23" height="23"><use href="#rep"/></svg>
<div class="kw" style="left:276.9px;top:372.5px">0 kW</div>
<svg class="a" style="left:285.9px;top:397.5px" width="22" height="22"><use href="#mtr"/></svg>
<div class="dp" style="left:285.9px;top:424px"><div class="r1">0 rpm</div><div class="r2">691 l/s</div><div class="r3">0 bar</div></div>
<svg class="a" style="left:304.9px;top:479px" width="23" height="23"><use href="#rep"/></svg>
<div class="kw" style="left:363.1px;top:372.5px">230 kW</div>
<svg class="a" style="left:372.1px;top:397.5px" width="22" height="22"><use href="#mtr"/></svg>
<div class="dp" style="left:372.1px;top:424px"><div class="r1">876 rpm</div><div class="r2">691 l/s</div><div class="r3">36 bar</div></div>
<svg class="a" style="left:391.1px;top:479px" width="23" height="23"><use href="#rep"/></svg>
<div class="kw" style="left:449.0px;top:372.5px">0 kW</div>
<svg class="a" style="left:458.0px;top:397.5px" width="22" height="22"><use href="#mtr"/></svg>
<div class="dp" style="left:458.0px;top:424px"><div class="r1">0 rpm</div><div class="r2">120 l/s</div><div class="r3">0 bar</div></div>
<svg class="a" style="left:477.0px;top:479px" width="23" height="23"><use href="#rep"/></svg>
<div class="kw" style="left:535.5px;top:372.5px">170 kW</div>
<svg class="a" style="left:544.5px;top:397.5px" width="22" height="22"><use href="#mtr"/></svg>
<div class="dp" style="left:544.5px;top:424px"><div class="r1">1776 rpm</div><div class="r2">120 l/s</div><div class="r3">24 bar</div></div>
<svg class="a" style="left:563.5px;top:479px" width="23" height="23"><use href="#rep"/></svg>
<div class="kw" style="left:797.0px;top:372.5px">0 kW</div>
<svg class="a" style="left:806.0px;top:397.5px" width="22" height="22"><use href="#mtr"/></svg>
<div class="a" style="left:139px;top:96px;width:22px;height:21.5px;background:#111"><div class="a" style="left:4px;top:2.5px;width:14px;height:2px;background:#eee"></div><div class="a" style="left:3px;top:6px;width:1px;height:5px;background:#777"></div><div class="a" style="left:8px;top:7px;width:1px;height:5px;background:#666"></div><div class="a" style="left:13px;top:7px;width:4px;height:1px;background:#777"></div><div class="a" style="left:13px;top:10px;width:4px;height:1px;background:#777"></div><div class="a" style="left:3px;top:16.5px;width:8px;height:3px;background:#ddd"></div><div class="a" style="left:13px;top:16px;width:2px;height:2px;background:#ccc"></div><div class="a" style="left:17px;top:16px;width:2px;height:2px;background:#ccc"></div></div>
<div class="a" style="left:210px;top:125px;width:20px;height:19.5px;background:#1c1c1c"><div class="a" style="left:3.5px;top:3px;width:13.5px;height:9.5px;background:#55b4f0;border-top:1px solid #8fd0f8"></div><div class="a" style="left:4px;top:14.5px;width:12px;height:2px;background:#444"></div></div>
<div class="mp" style="left:235.5px;top:102px"><div style="color:#a52a35">-2.69 kW</div><div style="color:#2f9a2f">-99.7 %</div><div style="color:#3232e6">0.19 kV</div></div>
<div class="a" style="left:575.5px;top:222px;width:253.5px;height:97.5px;background:#c0c0c0;border:2px solid #2a2a2a;border-right-width:2.5px;border-bottom-width:2.5px"></div>
<div class="a" style="left:577.5px;top:224px;width:249px;height:1px;background:#e8e8e8"></div>
<div class="a" style="left:593px;top:279px;width:226.5px;height:36.5px;background:#0000f0"></div>
<svg class="a" style="left:593px;top:278px" width="227" height="30"><path d="M0 1.5 H227 M0 13.5 H227 M0 25.5 H227" stroke="#dcdcff" stroke-width="1" stroke-dasharray="2 2.5"/></svg>
<div class="a" style="left:592px;top:244px;width:1px;height:72px;background:#222"></div>
<div class="a" style="left:589px;top:315px;width:3px;height:1px;background:#222"></div>
<div class="a" style="left:570px;top:311.5px;width:19px;text-align:right;font-size:6.5px;line-height:7px;color:#222;letter-spacing:-0.5px">0</div>
<div class="a" style="left:589px;top:303px;width:3px;height:1px;background:#222"></div>
<div class="a" style="left:570px;top:299.5px;width:19px;text-align:right;font-size:6.5px;line-height:7px;color:#222;letter-spacing:-0.5px">3</div>
<div class="a" style="left:589px;top:291px;width:3px;height:1px;background:#222"></div>
<div class="a" style="left:570px;top:287.5px;width:19px;text-align:right;font-size:6.5px;line-height:7px;color:#222;letter-spacing:-0.5px">6</div>
<div class="a" style="left:589px;top:279px;width:3px;height:1px;background:#222"></div>
<div class="a" style="left:570px;top:275.5px;width:19px;text-align:right;font-size:6.5px;line-height:7px;color:#222;letter-spacing:-0.5px">9</div>
<div class="a" style="left:589px;top:267px;width:3px;height:1px;background:#222"></div>
<div class="a" style="left:570px;top:263.5px;width:19px;text-align:right;font-size:6.5px;line-height:7px;color:#222;letter-spacing:-0.5px">12</div>
<div class="a" style="left:589px;top:256px;width:3px;height:1px;background:#222"></div>
<div class="a" style="left:570px;top:252.5px;width:19px;text-align:right;font-size:6.5px;line-height:7px;color:#222;letter-spacing:-0.5px">15</div>
<div class="a" style="left:589px;top:245px;width:3px;height:1px;background:#222"></div>
<div class="a" style="left:570px;top:241.5px;width:19px;text-align:right;font-size:6.5px;line-height:7px;color:#222;letter-spacing:-0.5px">m</div>
<div class="a" style="left:640px;top:227.5px;width:130px;text-align:center;font-size:9.6px;line-height:12px;color:#2a2ae8;-webkit-text-stroke:0.4px #2a2ae8">Nível : 9.20 m</div>
<div class="a" style="left:723.5px;top:200.5px;width:102.5px;height:17px;background:#c4dcc4;border:1px solid #3a3a3a;color:#2a8a2a;font-size:9.5px;line-height:15px;text-align:center;-webkit-text-stroke:0.4px #2a8a2a;font-size:9.4px">Temperatura : 21.9 °C</div>
<svg class="a" style="left:577.5px;top:327px" width="23" height="23"><use href="#rep"/></svg>

<!-- Objetos de diagrama -->
<div class="a" style="left:822.5px;top:472.5px;width:159px;height:43px;background:#fff;border:1px solid #c8c8c8;box-shadow:0 0 2px rgba(0,0,0,0.25)"></div>
<svg class="a" style="left:825.5px;top:477px" width="11" height="11"><use href="#appico"/></svg>
<div class="a" style="left:841px;top:477.5px;font-size:9.5px;line-height:12px;color:#acacac;white-space:nowrap;letter-spacing:-0.35px">Objetos de diagrama</div>
<svg class="a" style="left:964px;top:477px" width="11" height="11"><path d="M1.5 1.5 L9 9 M9 1.5 L1.5 9" stroke="#9a9a9a" stroke-width="1.1"/></svg>
<div class="a" style="left:825px;top:492.5px;width:155px;height:22px;background:#c4c4c4;border-bottom:1.5px solid #2a2a2a"></div>
<div class="a" style="left:825px;top:492.5px;width:2px;height:21px;background:#333"></div>
<div class="a" style="left:847px;top:492.5px;width:1.2px;height:21px;background:#3a3a3a"></div>
<div class="a" style="left:869px;top:492.5px;width:1.2px;height:21px;background:#3a3a3a"></div>
<div class="a" style="left:891px;top:492.5px;width:1.2px;height:21px;background:#3a3a3a"></div>
<div class="a" style="left:912.5px;top:492.5px;width:1.2px;height:21px;background:#3a3a3a"></div>
<div class="a" style="left:934.5px;top:492.5px;width:1.2px;height:21px;background:#3a3a3a"></div>
<div class="a" style="left:956.5px;top:492.5px;width:1.2px;height:21px;background:#3a3a3a"></div>
<div class="a" style="left:978px;top:492.5px;width:2px;height:21px;background:#333"></div>
<svg class="a" style="left:827px;top:493px" width="152" height="21">
<g stroke="#555" stroke-width="1" fill="none"><rect x="4" y="3" width="15" height="15" stroke="#777" stroke-dasharray="1.5 1"/><path d="M6 8 H16 M6 11 H16 M8 14 H14"/></g>
<path d="M13 12 L13 20 L15 18 L17 21 L18.5 20 L16.5 17 L19 17 Z" fill="#eee" stroke="#222" stroke-width="0.8"/>
<g transform="translate(22,0)" stroke="#333" stroke-width="1.2" fill="none"><path d="M7 3 H14 M10.5 3 V17 M7 17 H14"/></g>
<g transform="translate(44,0)"><rect x="4" y="5" width="14" height="9" rx="3" fill="#e8e8e8" stroke="#222" stroke-width="1.1"/><line x1="7" y1="10" x2="12" y2="16" stroke="#111" stroke-width="1.8"/><circle cx="12.5" cy="16.5" r="1.4" fill="#e02020"/></g>
<g transform="translate(66,0)"><circle cx="10.5" cy="10.5" r="7" fill="#d4d4d4" stroke="#e6e6e6" stroke-width="1.5"/><circle cx="10.5" cy="10.5" r="4" fill="none" stroke="#c8c8c8" stroke-width="1"/></g>
<g transform="translate(88,0)"><path d="M6.5 2.5 H14.5 L17.5 5.5 V18 H6.5 Z" fill="#f6f6f6" stroke="#5a5a5a" stroke-width="0.8"/><path d="M9.5 5 V16 M12.5 5 V16 M15.5 7 V16" stroke="#b0b0b0" stroke-width="0.7"/><path d="M2 19.5 Q2 13 4 11.5 V9 H7.5 V12 H10.5 V9 H14 V11.5 Q16 13 16 19.5 H10.5 V15.5 H7.5 V19.5 Z" fill="#0e0e0e"/></g>
<g transform="translate(110,0)"><rect x="9" y="3" width="9" height="11" fill="#eee" stroke="#555" stroke-width="0.8"/><rect x="3" y="4" width="9" height="6" fill="#ddd" stroke="#444" stroke-width="0.8"/><rect x="4.5" y="6" width="5" height="2" fill="#20a0a0"/><rect x="5" y="10" width="11" height="7" fill="#1010ff" stroke="#333" stroke-width="0.8"/><path d="M4 18 H17" stroke="#333" stroke-width="1.2"/></g>
<g transform="translate(132,0)"><circle cx="9" cy="12" r="6" fill="#777" stroke="#222" stroke-width="1"/><path d="M11 9 L15 5" stroke="#ff2020" stroke-width="2.2"/><circle cx="17" cy="10" r="0.9" fill="#111"/><circle cx="8" cy="4" r="0.8" fill="#111"/></g>
</svg>
</body></html>
